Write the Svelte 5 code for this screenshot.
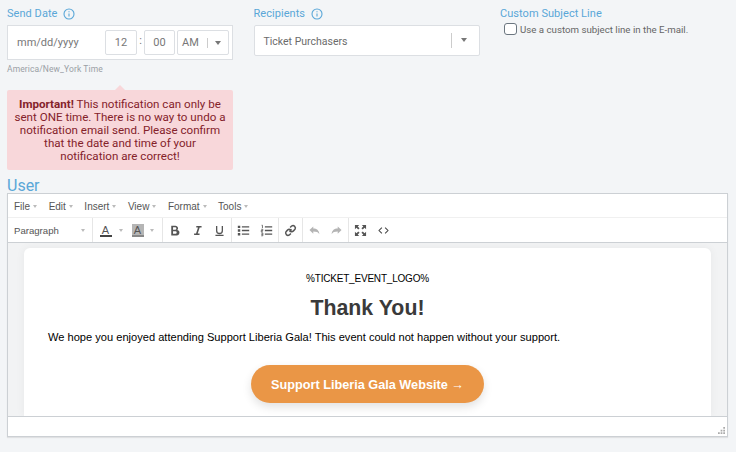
<script>
  const menus = ['File', 'Edit', 'Insert', 'View', 'Format', 'Tools'];
</script>

<div class="page">
  <div class="fields">
    <div class="field">
      <div class="label">
        Send Date
        <svg class="info" viewBox="0 0 12 12"><circle cx="6" cy="6" r="5" /><path d="M6 5.4v3.2M6 3.2v1" /></svg>
      </div>
      <div class="date-box">
        <span class="date">mm/dd/yyyy</span>
        <span class="num hour">12</span>
        <span class="colon">:</span>
        <span class="num min">00</span>
        <span class="ampm">AM<i class="sep"></i><i class="caret"></i></span>
      </div>
      <div class="tz">America/New_York Time</div>
      <div class="alert">
        <b>Important!</b> This notification can only be sent ONE time. There is no way to undo a notification email send. Please confirm that the date and time of your<br />notification are correct!
      </div>
    </div>

    <div class="field">
      <div class="label">
        Recipients
        <svg class="info" viewBox="0 0 12 12"><circle cx="6" cy="6" r="5" /><path d="M6 5.4v3.2M6 3.2v1" /></svg>
      </div>
      <div class="select">
        <span>Ticket Purchasers</span>
        <i class="sep"></i><i class="caret"></i>
      </div>
    </div>

    <div class="field">
      <div class="label">Custom Subject Line</div>
      <div class="check">
        <span class="box"></span>
        <span class="check-text">Use a custom subject line in the E-mail.</span>
      </div>
    </div>
  </div>

  <div class="user">User</div>

  <div class="editor">
    <div class="menubar">
      {#each menus as m}
        <span class="menu">{m}<i class="mini"></i></span>
      {/each}
    </div>
    <div class="toolbar">
      <div class="group para">Paragraph<i class="mini"></i></div>
      <div class="group colors">
        <span class="tool-a">A</span><i class="mini"></i>
        <span class="tool-a shade">A</span><i class="mini"></i>
      </div>
      <div class="group icons">
        <svg viewBox="0 0 16 16"><path class="fill" d="M4 2h5.2a3.2 3.2 0 0 1 2.3 5.4 3.4 3.4 0 0 1-1.8 6.6H4zM6.2 4v3h2.6a1.5 1.5 0 0 0 0-3zM6.2 9v3h3a1.5 1.5 0 0 0 0-3z" fill-rule="evenodd" /></svg>
        <svg viewBox="0 0 16 16"><path class="fill" d="M6.5 2.5h6.5v1.8h-2.3L8.3 11.8h2.2v1.7H3.8v-1.7h2.4l2.4-7.5H6.5z" /></svg>
        <svg viewBox="0 0 16 16"><path class="line" d="M4.5 2.5v5.7a3.5 3.5 0 0 0 7 0V2.5M3 14h10" /></svg>
      </div>
      <div class="group icons">
        <svg viewBox="0 0 16 16"><path class="line" d="M6 3.5h9M6 8h9M6 12.5h9" /><path class="fill" d="M1 2h3v3H1zM1 6.5h3v3H1zM1 11h3v3H1z" /></svg>
        <svg viewBox="0 0 16 16"><path class="line" d="M6 3.5h9M6 8h9M6 12.5h9" /><path class="thin" d="M2 1.5h1v3.5M1.5 6.5h2v1.5h-2v1.5h2M1.5 11h2v3.5h-2M1.5 12.7h2" /></svg>
      </div>
      <div class="group icons">
        <svg viewBox="1 1 14 14"><path class="line link" d="M6.8 9.2l2.4-2.4M7.6 4.8l1.6-1.6a2.6 2.6 0 0 1 3.6 3.6l-1.6 1.6a2.6 2.6 0 0 1-3.2.4M8.4 11.2l-1.6 1.6a2.6 2.6 0 0 1-3.6-3.6l1.6-1.6a2.6 2.6 0 0 1 3.2-.4" /></svg>
      </div>
      <div class="group icons off">
        <svg viewBox="0 0 16 16"><path class="fill" d="M6.5 3v2.6c4.2 0 7 2.2 7.5 6.9-1.2-2.6-3.6-3.4-7.5-3.4V12L1.8 7.5z" /></svg>
        <svg viewBox="0 0 16 16"><path class="fill" d="M9.5 3v2.6C5.3 5.6 2.5 7.8 2 12.5c1.2-2.6 3.6-3.4 7.5-3.4V12l4.7-4.5z" /></svg>
      </div>
      <div class="group icons last">
        <svg viewBox="1 1 14 14"><path class="fill" d="M2 2h4.6L5 3.6l2 2L5.6 7l-2-2L2 6.6zM14 2v4.6L12.4 5l-2 2L9 5.6l2-2L9.4 2zM2 14V9.4L3.6 11l2-2L7 10.4l-2 2L6.6 14zM14 14H9.4l1.6-1.6-2-2L10.4 9l2 2L14 9.4z" /></svg>
        <svg viewBox="0 0 16 16"><path class="thin code" d="M6 4.5L2.5 8 6 11.5M10 4.5L13.5 8 10 11.5" /></svg>
      </div>
    </div>
    <div class="content">
      <div class="card">
        <div class="logo">%TICKET_EVENT_LOGO%</div>
        <h1>Thank You!</h1>
        <p>We hope you enjoyed attending Support Liberia Gala! This event could not happen without your support.</p>
        <div class="cta"><span class="btn">Support Liberia Gala Website →</span></div>
      </div>
    </div>
    <div class="status">
      <svg class="grip" viewBox="0 0 8 8"><path d="M6 0h2v2H6zM3 3h2v2H3zM6 3h2v2H6zM0 6h2v2H0zM3 6h2v2H3zM6 6h2v2H6z" /></svg>
    </div>
  </div>
</div>

<style>
  :global(body) {
    margin: 0;
    background: #f3f5f7;
  }
  .page {
    width: 736px;
    height: 452px;
    box-sizing: border-box;
    padding: 6px 8px 0 7px;
    overflow: hidden;
    font-family: Roboto, sans-serif;
    color: #666;
  }
  .fields {
    display: flex;
    gap: 20.5px;
    height: 164px;
  }
  .field {
    width: 226px;
    flex: none;
  }
  .label {
    display: flex;
    align-items: center;
    gap: 6px;
    height: 15px;
    font-size: 11px;
    line-height: 15px;
    letter-spacing: 0.05px;
    color: #5aa7d8;
  }
  .info {
    width: 12px;
    height: 12px;
    fill: none;
    stroke: #5aa7d8;
    stroke-width: 1.1;
  }
  .date-box {
    display: flex;
    align-items: center;
    box-sizing: border-box;
    height: 35px;
    margin-top: 4px;
    padding: 0 3px 0 9px;
    background: #fff;
    border: 1px solid #dcdfe3;
    font-size: 11px;
    color: #777;
  }
  .date {
    width: 88px;
  }
  .num, .ampm {
    box-sizing: border-box;
    height: 25px;
    display: flex;
    align-items: center;
    justify-content: center;
    background: #fff;
    border: 1px solid #dcdfe3;
    border-radius: 2px;
  }
  .hour { width: 32px; }
  .min { width: 31px; }
  .colon {
    width: 7px;
    margin: 0 0 5px 0;
    text-align: center;
  }
  .ampm {
    width: 52px;
    margin-left: 2px;
    padding-left: 4px;
    justify-content: flex-start;
  }
  .ampm .sep {
    height: 10px;
    margin-left: 8px;
  }
  .ampm .caret {
    margin-left: 7px;
  }
  .sep {
    display: block;
    width: 1px;
    background: #ccc;
  }
  .caret {
    display: block;
    width: 0;
    height: 0;
    border: 3.5px solid transparent;
    border-top: 4px solid #777;
    border-bottom: 0;
  }
  .tz {
    margin-top: 3px;
    font-size: 8.5px;
    line-height: 12px;
    letter-spacing: 0.1px;
    color: #9a9fa5;
  }
  .alert {
    position: relative;
    margin-top: 15px;
    padding: 7.5px 5px 7px;
    background: #f8d7da;
    border-radius: 2px;
    font-size: 11.6px;
    line-height: 13.1px;
    text-align: center;
    color: #84222a;
  }
  .alert::before {
    content: '';
    position: absolute;
    left: 50%;
    top: -5px;
    margin-left: -5px;
    border: 5px solid transparent;
    border-top: 0;
    border-bottom-color: #f8d7da;
  }
  .select {
    display: flex;
    align-items: center;
    box-sizing: border-box;
    height: 31px;
    margin-top: 4px;
    padding: 0 9px;
    background: #fff;
    border: 1px solid #dcdfe3;
    border-radius: 2px;
    font-size: 10.5px;
    color: #6b6b6b;
  }
  .select span {
    flex: 1;
    padding-top: 1px;
  }
  .select .sep {
    height: 15px;
    margin-right: 9px;
  }
  .select .caret {
    margin-right: 3px;
    margin-top: -1px;
  }
  .check {
    display: flex;
    align-items: flex-start;
    gap: 3px;
    margin: 2px 0 0 4px;
    width: 240px;
    font-size: 9.7px;
    line-height: 12px;
    white-space: nowrap;
    color: #666;
  }
  .check-text {
    margin-top: 1px;
  }
  .box {
    box-sizing: border-box;
    width: 13px;
    height: 12px;
    background: #fff;
    border: 1px solid #6b7680;
    border-radius: 3px;
  }
  .user {
    height: 15px;
    margin-top: 8px;
    font-size: 16px;
    line-height: 15px;
    color: #5aa7d8;
  }
  .editor {
    box-sizing: border-box;
    width: 721px;
    height: 244px;
    display: flex;
    flex-direction: column;
    background: #fff;
    border: 1px solid #ccd0d4;
    box-shadow: 0 1px 1px rgba(0, 0, 0, 0.08);
    font-family: "Liberation Sans", Arial, sans-serif;
  }
  .menubar {
    display: flex;
    align-items: center;
    gap: 11.5px;
    height: 24px;
    flex: none;
    padding: 1px 6px 0;
    border-bottom: 1px solid #f0f0f0;
    box-sizing: border-box;
    font-size: 10px;
    color: #555;
  }
  .menu {
    display: flex;
    align-items: center;
    gap: 3px;
  }
  .mini {
    display: block;
    width: 0;
    height: 0;
    border: 2.5px solid transparent;
    border-top: 3px solid #bbb;
    border-bottom: 0;
  }
  .toolbar {
    display: flex;
    height: 25px;
    flex: none;
    box-sizing: border-box;
    border-bottom: 1px solid #ccd0d4;
  }
  .group {
    display: flex;
    align-items: center;
    border-right: 1px solid #e6e6e6;
    font-size: 9.6px;
    color: #555;
  }
  .group.last {
    border-right: 0;
  }
  .para {
    width: 85px;
    box-sizing: border-box;
    padding: 0 7.5px 0 6px;
    justify-content: space-between;
  }
  .colors {
    width: 70px;
    box-sizing: border-box;
    padding-left: 6.5px;
  }
  .tool-a {
    width: 12px;
    height: 13px;
    font-size: 11px;
    line-height: 12px;
    text-align: center;
    border-bottom: 2px solid #444;
    box-sizing: border-box;
  }
  .colors .mini {
    margin: 0 9px 0 7px;
  }
  .colors .mini:last-child {
    margin-right: 0;
    margin-left: 6px;
  }
  .tool-a.shade {
    background: #b5b5b5;
    border-bottom-color: #888;
  }
  .icons {
    gap: 9.5px;
    padding: 0 5px;
  }
  .icons svg {
    width: 13px;
    height: 13px;
    flex: none;
  }
  .fill {
    fill: #555;
  }
  .line {
    fill: none;
    stroke: #555;
    stroke-width: 1.6;
  }
  .thin {
    fill: none;
    stroke: #555;
    stroke-width: 1;
  }
  .thin.code {
    stroke: #444;
    stroke-width: 1.3;
  }
  .off .fill {
    fill: #b4b4b4;
  }
  .content {
    flex: 1;
    min-height: 0;
    overflow: hidden;
    padding: 5px 16px 0;
    background: #f2f3f4;
  }
  .card {
    height: 100%;
    padding-top: 25px;
    box-sizing: border-box;
    background: #fff;
    border-radius: 6px 6px 0 0;
    box-shadow: 0 0 10px rgba(0, 0, 0, 0.05);
    color: #000;
  }
  .logo {
    font-size: 10px;
    letter-spacing: -0.2px;
    line-height: 12px;
    text-align: center;
  }
  h1 {
    margin: 10px 0 0;
    font-size: 21.3px;
    line-height: 26px;
    text-align: center;
    color: #3a3a3a;
  }
  p {
    margin: 9px 0 0 24px;
    font-size: 11.1px;
    line-height: 14px;
  }
  .cta {
    display: flex;
    justify-content: center;
    margin-top: 21px;
  }
  .btn {
    display: block;
    box-sizing: border-box;
    width: 233px;
    height: 38px;
    border-radius: 19px;
    background: #ea9646;
    box-shadow: 0 4px 10px rgba(0, 0, 0, 0.12);
    font-size: 12.7px;
    font-weight: bold;
    line-height: 40px;
    text-align: center;
    color: #fff;
  }
  .status {
    position: relative;
    height: 20px;
    flex: none;
    box-sizing: border-box;
    border-top: 1px solid #ccd0d4;
    background: #fff;
  }
  .grip {
    position: absolute;
    right: 2px;
    bottom: 2px;
    width: 7px;
    height: 7px;
    fill: #aaa;
  }
</style>
